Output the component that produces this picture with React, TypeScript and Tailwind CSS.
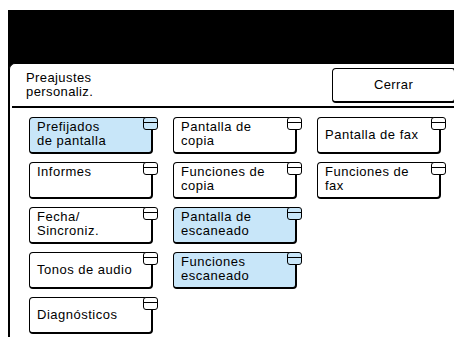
type Item = { label: string[]; active?: boolean; center?: boolean };

const columns: Item[][] = [
  [
    { label: ["Prefijados", "de pantalla"], active: true },
    { label: ["Informes"] },
    { label: ["Fecha/", "Sincroniz."] },
    { label: ["Tonos de audio"], center: true },
    { label: ["Diagnósticos"], center: true },
  ],
  [
    { label: ["Pantalla de", "copia"] },
    { label: ["Funciones de", "copia"] },
    { label: ["Pantalla de", "escaneado"], active: true },
    { label: ["Funciones", "escaneado"], active: true },
  ],
  [
    { label: ["Pantalla de fax"], center: true },
    { label: ["Funciones de", "fax"] },
  ],
];

const MenuButton = ({ item }: { item: Item }) => {
  const bg = item.active ? "bg-[#c8e6f9]" : "bg-white";
  return (
    <div
      className={`relative w-[124px] h-[37px] ${bg} border border-black border-r-2 border-b-2 rounded-[4px] pl-[7px] pr-[10px] flex ${
        item.center ? "items-center" : "items-start pt-[2px]"
      }`}
    >
      <div className="text-[13px] leading-[14px] tracking-[0.5px] text-black whitespace-nowrap">
        {item.label.map((l) => (
          <div key={l}>{l}</div>
        ))}
      </div>
      <div
        className={`absolute -top-px -right-[7px] w-[15px] h-[13px] ${bg} border border-black rounded-[3px] flex flex-col`}
      >
        <div className="h-[5px] border-b border-black" />
      </div>
    </div>
  );
};

export default function App() {
  return (
    <div
      className="w-[454px] h-[337px] bg-white overflow-hidden"
      style={{ fontFamily: '"Liberation Sans", Arial, sans-serif' }}
    >
      <div className="ml-[8px] mt-[10px] w-[460px] h-[327px] bg-black flex flex-col">
        <div className="h-[53px] shrink-0" />
        <div className="ml-px flex-1 bg-white border-l border-t border-black rounded-tl-[6px] flex flex-col">
          <div className="h-[44px] shrink-0 flex items-center justify-between border-b-2 border-black ml-[2px] pl-[14px]">
            <div className="text-[13px] leading-[14px] tracking-[0.4px] text-black">
              <div>Preajustes</div>
              <div>personaliz.</div>
            </div>
            <div className="w-[124px] h-[35px] mr-[12px] border border-black border-r-2 border-b-2 rounded-[4px] flex items-center justify-center text-[13px] tracking-[0.4px] text-black">
              Cerrar
            </div>
          </div>
          <div className="flex gap-[20px] pl-[19px] pt-[9px]">
            {columns.map((col, i) => (
              <div key={i} className="flex flex-col gap-[8px]">
                {col.map((item) => (
                  <MenuButton key={item.label.join(" ")} item={item} />
                ))}
              </div>
            ))}
          </div>
        </div>
      </div>
    </div>
  );
}
